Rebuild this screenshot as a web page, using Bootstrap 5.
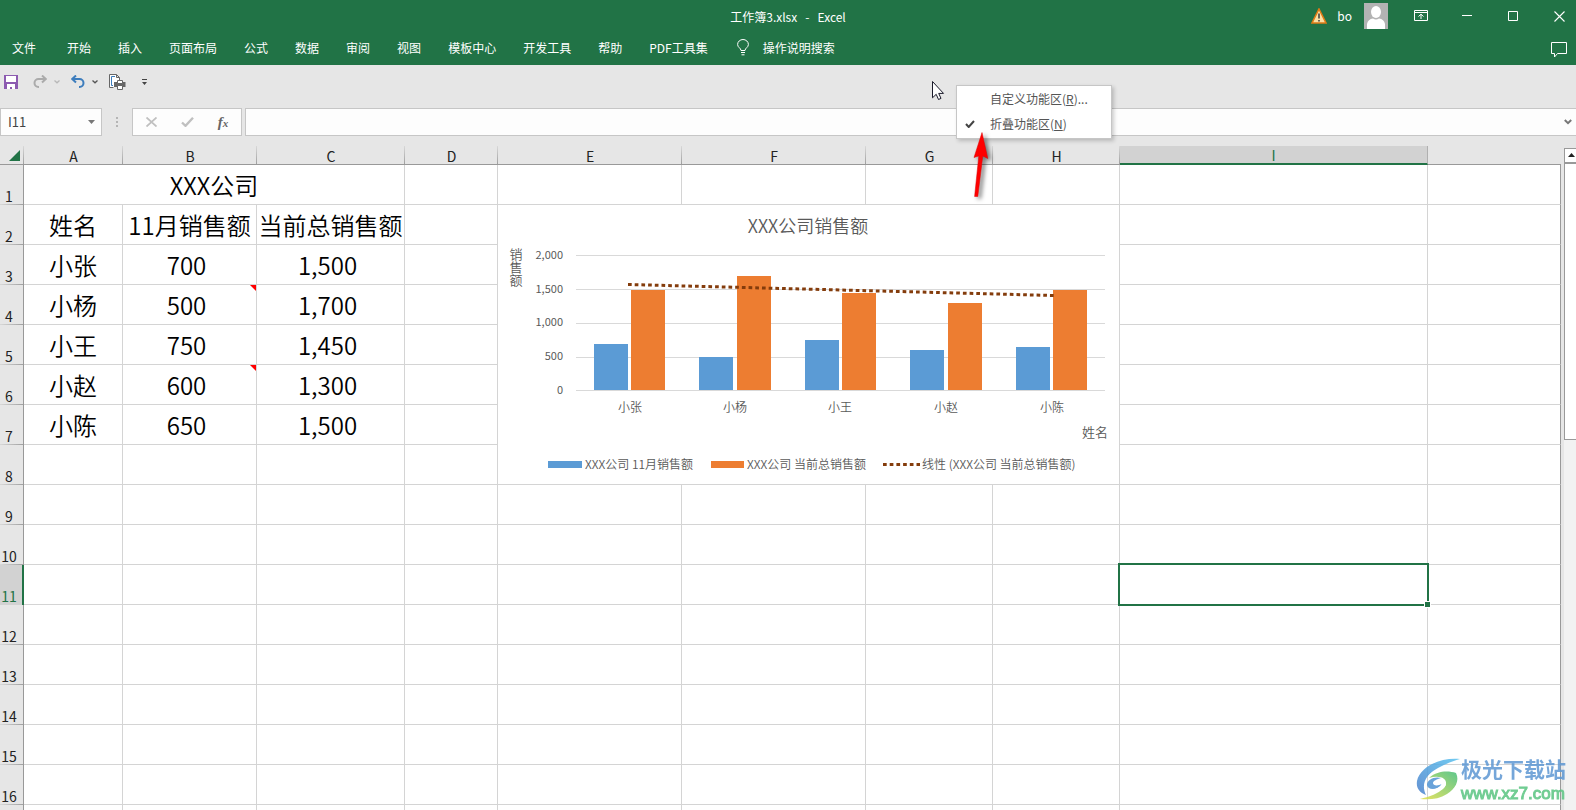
<!DOCTYPE html>
<html lang="zh-CN">
<head>
<meta charset="utf-8">
<meta name="viewport" content="width=device-width, initial-scale=1">
<title>工作簿3.xlsx - Excel</title>
<link href="https://cdn.jsdelivr.net/npm/bootstrap@5.3.0/dist/css/bootstrap.min.css" rel="stylesheet">
<style>
  :root { --xl-green: #217346; --xl-chrome: #e6e6e6; --xl-line: #d4d4d4; --xl-edge: #999; }
  body { font: 12px/16px "Noto Sans CJK SC", sans-serif; background: var(--xl-chrome); color: #000; }
  button, input { font: inherit; }
  .plain { border: 0; background: none; padding: 0; color: inherit; display: inline-flex; align-items: center; justify-content: center; }
  svg { display: block; flex: none; }

  .app-head { background: var(--xl-green); color: #fff; height: 65px; }
  .title-row { height: 32px; }
  .title-row .doc-name { white-space: pre; padding-top: 2px; }
  .win-btn { width: 46px; height: 32px; }
  .win-close { width: 40px; padding-left: 6px; }
  .avatar { margin: 0 10px 0 12px; }
  .user-name { margin-left: 10px; }
  .tab-row { height: 33px; padding: 0 9px 2px 12px; gap: 27px; }
  .tab-row a { color: #fff; text-decoration: none; }
  .tab-row .file-tab { margin-right: 4px; }
  .tell-me { gap: 14px; margin-left: 2px; }

  .quick { height: 43px; padding: 0 4px 10px; }
  .quick .gap-sm { margin-left: 7px; }
  .quick .gap-md { margin-left: 11px; }
  .quick .gap-lg { margin-left: 15px; }
  .formula-row { height: 28px; }
  .formula-row .grip { margin: 0 14px; }
  .fbox { background: #fdfdfd; border: 1px solid #c6c6c6; height: 28px; }
  .fbox input { border: 0; outline: 0; background: none; min-width: 0; color: #444; font-size: 13px; }
  .name-box { width: 102px; padding: 0 6px 0 7px; }
  .fx-box { width: 110px; color: #c0c0c0; margin-right: 3px; }
  .fx-box .plain { width: 36px; }
  .fx-sign { font: italic bold 15px/16px "Liberation Serif", serif; color: #666; }
  .fx-sign small { font-size: 11px; }

  .sheet-area { padding-top: 10px; min-height: 0; }
  .grid-table { table-layout: fixed; width: 100%; border-collapse: separate; border-spacing: 0; }
  .grid-table th { font-weight: 400; font-size: 14px; line-height: 16px; padding: 0 0 1px; text-align: center; background: var(--xl-chrome); vertical-align: bottom; color: #222; }
  .grid-table thead th { height: 19px; padding: 0; border-bottom: 1px solid var(--xl-edge); }
  .grid-table thead th:not(:last-child) { background: linear-gradient(#d8d8d8, #a0a0a0) right / 1px 100% no-repeat var(--xl-chrome); }
  .grid-table tbody th { height: 40px; border-right: 1px solid var(--xl-edge); padding-right: 5px; background: linear-gradient(90deg, #d8d8d8, #a0a0a0) bottom / 100% 1px no-repeat var(--xl-chrome); }
  .grid-table td { height: 40px; padding: 0; background: #fff; border-right: 1px solid var(--xl-line); border-bottom: 1px solid var(--xl-line); text-align: center; vertical-align: middle; font-size: 24px; line-height: 32px; font-weight: 350; white-space: nowrap; position: relative; }
  .grid-table td:last-child { border-right-color: var(--xl-edge); }
  .grid-table .num { padding-right: 6px; }
  .grid-table thead th.sel-col:not(:last-child) { background: #d2d2d2; color: var(--xl-green); border-bottom: 2px solid var(--xl-green); border-right: 1px solid #b0b0b0; line-height: 15px; }
  .grid-table tbody th.sel-row { background: #d2d2d2; color: var(--xl-green); border-right: 2px solid var(--xl-green); padding-right: 4px; }
  .noted::before { content: ""; position: absolute; top: 0; right: 0; border: 3px solid; border-color: red red transparent transparent; }
  .active-cell::before { content: ""; position: absolute; inset: -2px; border: 2px solid var(--xl-green); z-index: 1; }
  .active-cell::after { content: ""; position: absolute; right: -4px; bottom: -4px; width: 7px; height: 7px; border: 1px solid #fff; background: var(--xl-green); z-index: 2; }
  .chart text { font-size: 12px; fill: #595959; font-weight: 350; }
  .chart .chart-title { font-size: 18px; }
  .chart .axis-title { font-size: 13px; }
  .chart .tick { font-size: 11px; font-weight: 400; text-anchor: end; }
  .chart .mid { text-anchor: middle; }
  .chart .upright { writing-mode: vertical-rl; }

  .vbar { width: 12px; margin: 2px 0 0 3px; background: #f2f2f2; overflow: hidden; }
  .vbar .up-btn, .vbar .thumb { width: 18px; border: 1px solid var(--xl-edge); background: #fff; }
  .vbar .up-btn { height: 15px; }
  .vbar .thumb { height: 277px; }

  .ctx-menu { display: block; left: 956px; top: 85px; width: 156px; min-width: 0; height: 54px; padding: 0 0 2px; border: 1px solid #c6c6c6; border-radius: 0; box-shadow: 2px 2px 4px rgba(0,0,0,.2); background: #fff; z-index: 5; }
  .ctx-menu button { height: 25px; color: #555; text-align: left; display: flex; align-items: center; width: 100%; border: 0; background: none; padding: 0 0 0 8px; font-size: 12px; }
  .ctx-menu .tick-slot { width: 25px; }
  .pointer { left: 931px; top: 80px; }
  .callout-arrow { left: 968px; top: 131px; z-index: 6; }
  .wmark { right: 10px; bottom: 6px; opacity: .85; z-index: 4; gap: 1px; }
  .wmark .site-cn { font-size: 21px; line-height: 31px; font-weight: 700; color: #5d97d3; }
  .wmark .site-url { font: 17px/20px "Liberation Sans", sans-serif; color: #58c480; -webkit-text-stroke: 1px #58c480; }
</style>
</head>
<body class="vh-100 overflow-hidden d-flex flex-column position-relative">

<header class="app-head flex-shrink-0">
  <div class="title-row d-flex align-items-center position-relative">
    <div class="doc-name w-100 text-center position-absolute">工作簿3.xlsx   -   Excel</div>
    <div class="ms-auto d-flex align-items-center position-relative">
      <svg width="16" height="16" viewBox="0 0 16 16"><path d="M8 1 15 15H1z" fill="#fbe0a4" stroke="#e07b16" stroke-width="1.6"/><path d="M8 5.5v5M8 12v1.6" stroke="#3a3a3a" stroke-width="1.5"/></svg>
      <span class="user-name">bo</span>
      <svg class="avatar" width="24" height="26" viewBox="0 0 24 26"><path fill="#b3b3b3" d="M0 0h24v26H0z"/><ellipse cx="12" cy="9" rx="5" ry="6" fill="#fff"/><path d="M3 26v-5q1-5 6-5.500 3 2 6 0 5 .5 6 5.500v5z" fill="#fff"/></svg>
      <button class="plain win-btn" aria-label="功能区显示选项"><svg width="14" height="12" viewBox="0 0 14 12" fill="none" stroke="#fff"><path d="M.5.500h13v10H.5zM.5 2.500h13M7 9V4.500M4.500 6.500 7 4.200l2.500 2.300"/></svg></button>
      <button class="plain win-btn" aria-label="最小化"><svg width="10" height="10"><path d="M0 4.500h10" stroke="#fff"/></svg></button>
      <button class="plain win-btn" aria-label="最大化"><svg width="10" height="10"><path d="M.5.500h9v9h-9z" fill="none" stroke="#fff"/></svg></button>
      <button class="plain win-btn win-close" aria-label="关闭"><svg width="11" height="11"><path d="m.5.500 10 10m0-10-10 10" stroke="#fff" stroke-width="1.100"/></svg></button>
    </div>
  </div>
  <nav class="tab-row d-flex align-items-center">
    <a href="#" class="file-tab">文件</a><a href="#">开始</a><a href="#">插入</a><a href="#">页面布局</a><a href="#">公式</a><a href="#">数据</a><a href="#">审阅</a><a href="#">视图</a><a href="#">模板中心</a><a href="#">开发工具</a><a href="#">帮助</a><a href="#">PDF工具集</a>
    <a href="#" class="tell-me d-flex align-items-center"><svg width="12" height="17" viewBox="0 0 12 17" fill="none" stroke="#fff"><path d="M4 11.500C4 9 .6 8.500.6 5.500a5.400 5 0 0 1 10.800 0c0 3-3.400 3.500-3.400 6zM4 13.500h4M4.500 15.800h3"/></svg>操作说明搜索</a>
    <button class="plain ms-auto pt-1" aria-label="批注"><svg width="16" height="16" viewBox="0 0 16 16" fill="none" stroke="#fff"><path d="M.5.500h15v11H6.500l-3 3.500v-3.500h-3z"/></svg></button>
  </nav>
</header>

<div class="quick d-flex align-items-center flex-shrink-0">
  <button class="plain" aria-label="保存"><svg width="14" height="14" viewBox="0 0 14 14"><path fill="#8c5bb0" d="M0 0h14v14H0z"/><path fill="#fff" d="M2 1h10v6H2zM3 9h8v5H8v-2H6v2H3z"/></svg></button>
  <button class="plain gap-lg" aria-label="重做"><svg width="14" height="13" viewBox="0 0 14 13" fill="none" stroke="#ababab" stroke-width="2"><path d="M13 4H5.500a4 4 0 0 0 0 8H6M9 .5 12.800 4 9 7.500"/></svg></button>
  <button class="plain gap-sm" aria-label="重做选项"><svg width="6" height="4" fill="none" stroke="#b8b8b8" stroke-width="1.300"><path d="m.5.500 2.500 2.300L5.500.5"/></svg></button>
  <button class="plain gap-md" aria-label="撤消"><svg width="14" height="13" viewBox="0 0 14 13" fill="none" stroke="#3d7dbd" stroke-width="2"><path d="M1 4h7.500a4 4 0 0 1 0 8H8M5 .5 1.200 4 5 7.500"/></svg></button>
  <button class="plain gap-sm" aria-label="撤消选项"><svg width="6" height="4" fill="none" stroke="#555" stroke-width="1.300"><path d="m.5.500 2.500 2.300L5.500.5"/></svg></button>
  <button class="plain gap-md" aria-label="打印预览"><svg width="17" height="16" viewBox="0 0 17 16" fill="none" stroke="#666"><path d="M4.500 13.500H.5V.5h7l3 3v3M7.500.5v3h3" fill="#fff"/><path d="M6 2.500H2.500v9H4" stroke="#3d7dbd"/><path d="M5 8h11.500v5H5z" fill="#666" stroke="none"/><path d="M8.500 6.500h5v3h-5zM8.500 11.500h5v4h-5z" fill="#fff"/></svg></button>
  <button class="plain gap-lg" aria-label="自定义快速访问工具栏"><svg width="7" height="6"><path d="M1 0h5v1H1zM1 3h5L3.500 6z" fill="#444"/></svg></button>
</div>

<div class="formula-row d-flex align-items-center flex-shrink-0">
  <div class="fbox name-box d-flex align-items-center">
    <input class="flex-fill w-100 p-0" aria-label="名称框" value="I11">
    <button class="plain" aria-label="名称列表"><svg width="7" height="4"><path d="M0 0h7L3.500 4z" fill="#777"/></svg></button>
  </div>
  <svg class="grip" width="2" height="10" fill="#b5b5b5" shape-rendering="crispEdges"><path d="M0 0h2v2H0zM0 4h2v2H0zM0 8h2v2H0z"/></svg>
  <div class="fbox fx-box d-flex">
    <button class="plain" aria-label="取消"><svg width="11" height="10"><path d="m.5.500 10 9m0-9-10 9" stroke="currentColor" stroke-width="1.800"/></svg></button>
    <button class="plain" aria-label="输入"><svg width="13" height="10" fill="none"><path d="m1 5.500 3.500 3.300L12 .8" stroke="currentColor" stroke-width="2.400"/></svg></button>
    <button class="plain fx-sign" aria-label="插入函数"><span>f<small>x</small></span></button>
  </div>
  <div class="fbox flex-fill d-flex align-items-center border-end-0 px-1">
    <input class="flex-fill p-0" aria-label="编辑栏">
    <button class="plain" aria-label="展开编辑栏"><svg width="8" height="6" fill="none" stroke="#777" stroke-width="2"><path d="m.8 1 3.200 3.200L7.200 1"/></svg></button>
  </div>
</div>

<main class="sheet-area flex-fill d-flex">
  <div class="flex-fill overflow-hidden">
    <table class="grid-table">
      <colgroup><col style="width:24px"><col style="width:99px"><col style="width:134px"><col style="width:148px"><col style="width:93px"><col style="width:184px"><col style="width:184px"><col style="width:127px"><col style="width:127px"><col style="width:308px"><col></colgroup>
      <thead><tr>
        <th aria-label="全选"><svg width="20" height="15"><path d="M20 1v11H9z" fill="#217346"/></svg></th>
        <th>A</th><th>B</th><th>C</th><th>D</th><th>E</th><th>F</th><th>G</th><th>H</th><th class="sel-col">I</th><th></th>
      </tr></thead>
      <tbody id="rows">
        <tr><th>1</th><td colspan="3">XXX公司</td><td></td><td></td><td></td><td></td><td></td><td></td><td></td></tr>
        <tr><th>2</th><td>姓名</td><td>11月销售额</td><td>当前总销售额</td><td></td>
          <td colspan="4" rowspan="7">
            <svg class="chart" width="100%" height="279" viewBox="0 0 621 279" role="img" aria-label="XXX公司销售额">
              <path d="M78 50.500h529M78 84.500h529M78 118.500h529M78 152.500h529M78 185.500h529" stroke="#d9d9d9"/>
              <path fill="#5b9bd5" d="M96 139h34v46H96zM201 152h34v33h-34zM307 135h34v50h-34zM412 145h34v40h-34zM518 142h34v43h-34z"/>
              <path fill="#ed7d31" d="M133 85h34v100h-34zM239 71h34v114h-34zM344 88h34v97h-34zM450 98h34v87h-34zM555 85h34v100h-34z"/>
              <path d="M130 79.500 556 90.500" stroke="#843c0c" stroke-width="3" stroke-dasharray="3.700 3"/>
              <text class="chart-title mid" x="310" y="28">XXX公司销售额</text>
              <text class="axis-title upright" x="18" y="43">销售额</text>
              <text class="tick" x="65" y="54">2,000</text><text class="tick" x="65" y="88">1,500</text><text class="tick" x="65" y="121">1,000</text><text class="tick" x="65" y="155">500</text><text class="tick" x="65" y="189">0</text>
              <text class="mid" x="132" y="207">小张</text><text class="mid" x="237" y="207">小杨</text><text class="mid" x="342" y="207">小王</text><text class="mid" x="448" y="207">小赵</text><text class="mid" x="554" y="207">小陈</text>
              <text class="axis-title mid" x="597" y="232">姓名</text>
              <path fill="#5b9bd5" d="M50 256h34v7H50z"/><text x="87" y="264">XXX公司 11月销售额</text>
              <path fill="#ed7d31" d="M213 256h33v7h-33z"/><text x="249" y="264">XXX公司 当前总销售额</text>
              <path d="M385 259.500h37" stroke="#843c0c" stroke-width="3" stroke-dasharray="3.700 3"/><text x="424" y="264">线性 (XXX公司 当前总销售额)</text>
            </svg>
          </td><td></td><td></td></tr>
        <tr><th>3</th><td>小张</td><td class="num">700</td><td class="num">1,500</td><td></td><td></td><td></td></tr>
        <tr><th>4</th><td>小杨</td><td class="num noted">500</td><td class="num">1,700</td><td></td><td></td><td></td></tr>
        <tr><th>5</th><td>小王</td><td class="num">750</td><td class="num">1,450</td><td></td><td></td><td></td></tr>
        <tr><th>6</th><td>小赵</td><td class="num noted">600</td><td class="num">1,300</td><td></td><td></td><td></td></tr>
        <tr><th>7</th><td>小陈</td><td class="num">650</td><td class="num">1,500</td><td></td><td></td><td></td></tr>
        <tr><th>8</th><td></td><td></td><td></td><td></td><td></td><td></td></tr>
      </tbody>
    </table>
  </div>
  <div class="vbar flex-shrink-0">
    <button class="plain up-btn d-block" aria-label="向上滚动"><svg width="16" height="13"><path d="M3 8h7L6.500 4z" fill="#222"/></svg></button>
    <div class="thumb"></div>
  </div>
</main>

<div class="dropdown-menu ctx-menu position-absolute" role="menu">
  <button role="menuitem"><span class="tick-slot"></span><span>自定义功能区(<u>R</u>)...</span></button>
  <button role="menuitem"><span class="tick-slot"><svg width="10" height="8" fill="none"><path d="m1 4 2.700 3L9 1" stroke="#444" stroke-width="2"/></svg></span><span>折叠功能区(<u>N</u>)</span></button>
</div>
<svg class="pointer position-absolute" width="14" height="22" viewBox="0 0 14 22"><path d="M1.500 1.500v16.300l3.700-3.500 2.300 5.200 2.500-1.100-2.300-5h4.800z" fill="#fff" stroke="#1a1a2a"/></svg>
<svg class="callout-arrow position-absolute" width="30" height="72" viewBox="0 0 30 72" style="filter:drop-shadow(3px 2px 2px rgba(0,0,0,.5))"><path d="M14 1.500 19.800 27.500 14.800 25 9.800 65.500H6.600L10.800 25 6 26.500z" fill="#f00" stroke="#d00" stroke-width=".5"/></svg>

<div class="wmark position-absolute d-flex align-items-center">
  <svg width="44" height="42" viewBox="0 0 44 42">
    <defs>
      <linearGradient id="wmBlue" x1="0" y1="1" x2="1" y2="0"><stop stop-color="#4a7fcb"/><stop offset="1" stop-color="#5ac3f0"/></linearGradient>
      <linearGradient id="wmGreen" x1="0" y1="1" x2="1" y2="0"><stop stop-color="#e5e048"/><stop offset="1" stop-color="#43bd78"/></linearGradient>
    </defs>
    <path d="M44 1C26-1 4 8 1 23c-1 7 2 11 9 14C5 27 9 17 22 10 29 6 37 3 44 1z" fill="url(#wmBlue)"/>
    <path d="M13 20c9-8 20-7 27-5 4 8-1 16-9 21-8 5-17 6-27 5 9-2 24-7 26-15 1-6-7-9-17-6z" fill="url(#wmGreen)"/>
    <path d="M25 20c-7-2-14 2-14 7 1 6 11 5 15-1-4 2-9 2-9-1 0-2 4-4 8-5z" fill="#4f93d4"/>
    <path d="M26 23c1 5-6 10-14 8 7 5 19 0 18-6 0-1-2-2-4-2z" fill="#fff"/>
  </svg>
  <div><div class="site-cn">极光下载站</div><div class="site-url">www.xz7.com</div></div>
</div>

<script src="https://cdn.jsdelivr.net/npm/bootstrap@5.3.0/dist/js/bootstrap.bundle.min.js"></script>
<script>
  // Empty rows below the data; I11 is the active cell, and the last row is only a sliver.
  const rows = document.getElementById('rows');
  for (let r = 9; r <= 17; r++) {
    const tr = rows.insertRow();
    const th = document.createElement('th');
    if (r < 17) th.textContent = r;
    if (r === 11) th.className = 'sel-row';
    tr.append(th);
    for (let c = 1; c <= 10; c++) {
      const td = tr.insertCell();
      if (r === 11 && c === 9) td.className = 'active-cell';
    }
  }
</script>
</body>
</html>
